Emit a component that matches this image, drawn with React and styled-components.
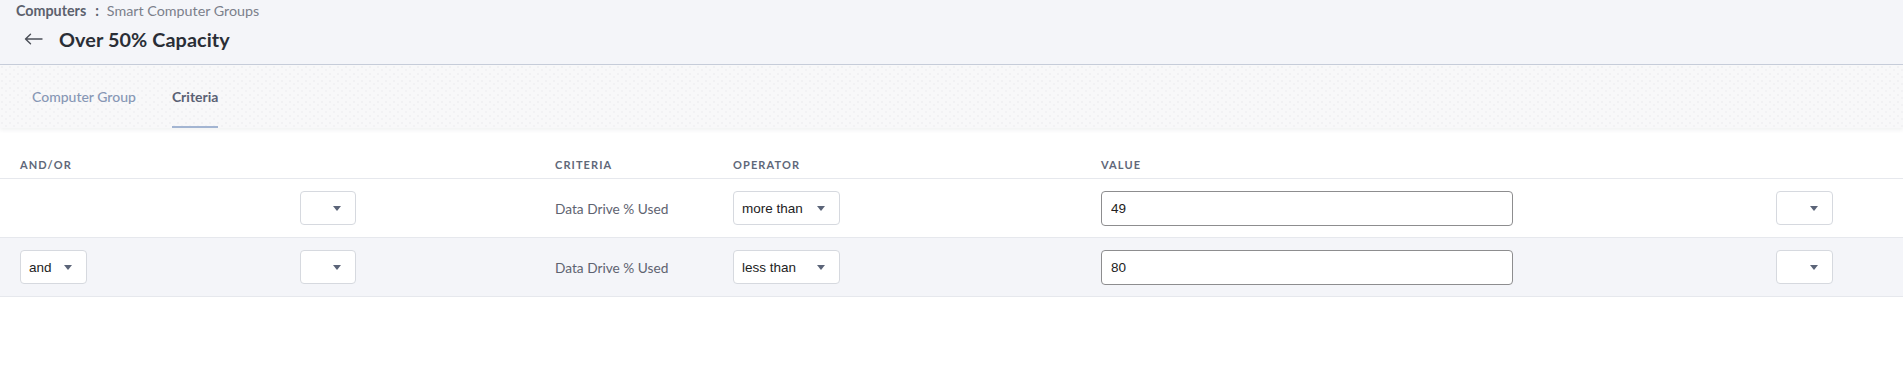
import React from "react";
import styled, { createGlobalStyle } from "styled-components";

const GlobalStyle = createGlobalStyle`
    body {
        margin: 0;
        background: #ffffff;
        font-family: "Lato", "Open Sans", sans-serif;
    }
`;

const Page = styled.div`
    width: 100%;
    min-height: 392px;
    background: #ffffff;
`;

const Header = styled.header`
    background: #f4f5f9;
    border-bottom: 1px solid #c8cedb;
    height: 64px;
    padding: 0 16px;
    box-sizing: content-box;
`;

const Breadcrumb = styled.div`
    display: flex;
    align-items: center;
    height: 20px;
    font-size: 14.3px;
    color: #7b808b;
`;

const Crumb = styled.span`
    font-weight: 700;
    color: #5c616d;
`;

const Sep = styled.span`
    font-weight: 700;
    color: #5c616d;
    margin: 0 8px 0 9px;
`;

const TitleRow = styled.div`
    display: flex;
    align-items: center;
    height: 37px;
    gap: 16px;
    padding-left: 8px;
`;

const BackButton = styled.button`
    border: 0;
    background: none;
    padding: 0;
    display: flex;
    align-items: center;
    color: #4b4f58;
    cursor: pointer;
`;

const Title = styled.h1`
    margin: 0;
    font-size: 19.8px;
    font-weight: 700;
    color: #2a2e36;
    letter-spacing: 0.1px;
`;

const TabBar = styled.nav`
    height: 63px;
    display: flex;
    gap: 36px;
    padding-left: 32px;
    background-color: #f8f8f9;
    background-image: radial-gradient(circle at 2px 2px, #f1f1f3 1.1px, transparent 1.5px),
        radial-gradient(circle at 6px 5px, #f2f2f4 1.1px, transparent 1.5px);
    background-size: 8px 7px, 8px 7px;
    box-shadow: 0 2px 4px rgba(40, 50, 70, 0.07);
    position: relative;
`;

const Tab = styled.a`
    display: flex;
    align-items: center;
    font-size: 14px;
    font-weight: ${(p) => (p.$active ? 700 : 500)};
    color: ${(p) => (p.$active ? "#5a6174" : "#8797b5")};
    border-bottom: 2px solid ${(p) => (p.$active ? "#a3b5d2" : "transparent")};
    box-sizing: border-box;
    padding-top: 2px;
    cursor: pointer;
`;

const Grid = styled.div`
    display: grid;
    grid-template-columns: 280px 255px 178px 368px 675px 1fr;
    align-items: center;
    height: ${(p) => p.$h}px;
    border-bottom: 1px solid #e6e8ed;
    background: ${(p) => (p.$shaded ? "#f4f5f9" : "#ffffff")};
    box-sizing: border-box;
`;

const HeadGrid = styled(Grid)`
    align-items: end;
    padding-bottom: 7px;
`;

const HeadCell = styled.div`
    padding-left: 20px;
    font-size: 11px;
    font-weight: 700;
    letter-spacing: 1.1px;
    color: #5f6879;
    text-transform: uppercase;
`;

const Cell = styled.div`
    padding-left: 20px;
    display: flex;
    align-items: center;
`;

const CriteriaText = styled.span`
    font-size: 13.7px;
    color: #5e6370;
`;

const Select = styled.div`
    display: flex;
    align-items: center;
    justify-content: space-between;
    width: ${(p) => p.$w}px;
    height: 34px;
    box-sizing: border-box;
    border: 1px solid #d6d9df;
    border-radius: 4px;
    background: #ffffff;
    padding: 0 14px 0 8px;
    font-family: "Liberation Sans", Arial, sans-serif;
    font-size: 13.5px;
    color: #222;
`;

const Caret = styled.span`
    width: 0;
    height: 0;
    border-left: 4px solid transparent;
    border-right: 4px solid transparent;
    border-top: 5px solid #5b6478;
    margin-left: auto;
`;

const ValueInput = styled.input`
    width: 412px;
    height: 35px;
    box-sizing: border-box;
    border: 1px solid #8d8d8f;
    border-radius: 4px;
    padding: 0 9px;
    font-family: "Liberation Sans", Arial, sans-serif;
    font-size: 13.5px;
    color: #222;
    background: #ffffff;
    outline: none;
`;

function ArrowLeft() {
    return (
        <svg width="19" height="12" viewBox="0 0 19 12" fill="none">
            <path d="M1.5 6H18M1.5 6L6.5 1.3M1.5 6L6.5 10.7" stroke="currentColor" strokeWidth="1.4" strokeLinecap="round" />
        </svg>
    );
}

function Dropdown({ width, value }) {
    return (
        <Select $w={width}>
            {value ? <span>{value}</span> : null}
            <Caret />
        </Select>
    );
}

const rows = [
    { andOr: null, criteria: "Data Drive % Used", operator: "more than", value: "49" },
    { andOr: "and", criteria: "Data Drive % Used", operator: "less than", value: "80" },
];

export default function App() {
    return (
        <Page>
            <GlobalStyle />
            <Header>
                <Breadcrumb>
                    <Crumb>Computers</Crumb>
                    <Sep>:</Sep>
                    <span>Smart Computer Groups</span>
                </Breadcrumb>
                <TitleRow>
                    <BackButton aria-label="Back">
                        <ArrowLeft />
                    </BackButton>
                    <Title>Over 50% Capacity</Title>
                </TitleRow>
            </Header>
            <TabBar>
                <Tab>Computer Group</Tab>
                <Tab $active>Criteria</Tab>
            </TabBar>
            <HeadGrid $h={51}>
                <HeadCell>And/Or</HeadCell>
                <HeadCell />
                <HeadCell>Criteria</HeadCell>
                <HeadCell>Operator</HeadCell>
                <HeadCell>Value</HeadCell>
                <HeadCell />
            </HeadGrid>
            {rows.map((r, i) => (
                <Grid key={i} $h={59} $shaded={i % 2 === 1}>
                    <Cell>{r.andOr ? <Dropdown width={67} value={r.andOr} /> : null}</Cell>
                    <Cell>
                        <Dropdown width={56} />
                    </Cell>
                    <Cell>
                        <CriteriaText>{r.criteria}</CriteriaText>
                    </Cell>
                    <Cell>
                        <Dropdown width={107} value={r.operator} />
                    </Cell>
                    <Cell>
                        <ValueInput defaultValue={r.value} />
                    </Cell>
                    <Cell>
                        <Dropdown width={57} />
                    </Cell>
                </Grid>
            ))}
        </Page>
    );
}
